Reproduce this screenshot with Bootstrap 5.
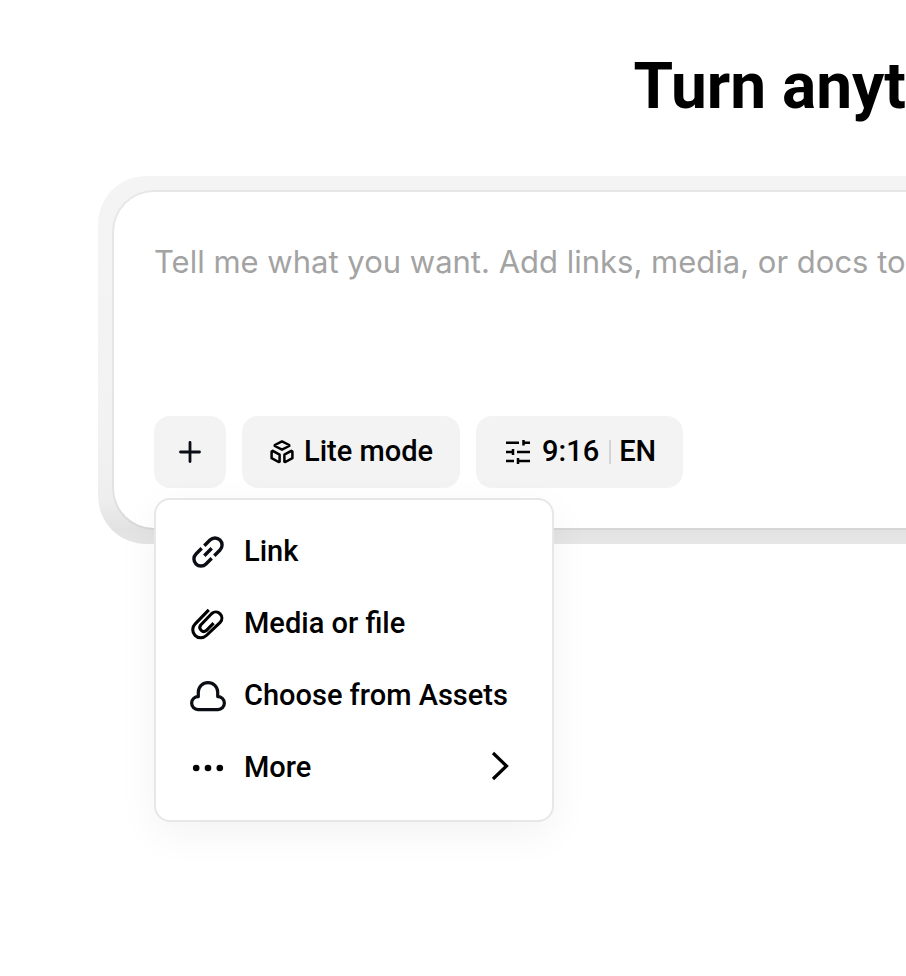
<!DOCTYPE html>
<html lang="en">
<head>
<meta charset="utf-8">
<meta name="viewport" content="width=device-width, initial-scale=1">
<title>Create</title>
<link href="https://cdn.jsdelivr.net/npm/bootstrap@5.3.0/dist/css/bootstrap.min.css" rel="stylesheet">
<style>
body{background:#fff;color:#000;font-family:Roboto,Inter,sans-serif;overflow-x:hidden}
.hero-title{font-size:64px;line-height:72px;font-weight:700;padding-top:51px;margin-bottom:53px}
.composer-frame{margin-left:98px;padding:14px 0 14px 14px;border-radius:48px 0 0 48px;background:linear-gradient(#f4f4f4 0%,#f2f2f2 70%,#eee 88%,#e2e2e2 96%,#e6e6e6 100%)}
.composer{background:#fff;background-clip:padding-box;border:2px solid rgba(0,0,0,.05);border-right:0;border-radius:42px 0 0 42px;padding:50px 0 40px 40px}
.prompt-box{display:block;height:174px;border:0;padding:0;resize:none;outline:0;background:transparent;overflow:hidden;white-space:nowrap;font:400 31px/40px Inter,sans-serif;color:#000}
.prompt-box::placeholder{color:#a3a3a3;opacity:1}
.tool-row{gap:16px}
.tool-btn{height:72px;padding:0 27px 0 26px;border:0;border-radius:16px;background:#f3f3f3;color:#000;font-size:29px;line-height:36px;font-weight:500;white-space:nowrap}
.tool-btn:hover,.tool-btn.show{background:#f3f3f3!important;color:#000!important}
.plus-btn{width:72px;padding:0}
.tool-label{padding-bottom:2px}
.ratio-divider{width:2px;height:24px;background:#d4d4d4;margin:0 8px 0 10px}
.add-menu{top:100%;left:0;width:400px;margin-top:10px;padding:16px 0;border:2px solid #e7e7e7;border-radius:16px;background:#fff;box-shadow:0 12px 40px rgba(0,0,0,.05)}
.add-menu .dropdown-item{height:72px;gap:18px;padding:0 42px 0 34px;color:#000;font-size:29px;line-height:36px;font-weight:500}
svg{flex:none;fill:none;stroke:#0b0d14;stroke-linejoin:round}
.ink{stroke:#000}
</style>
<script src="https://cdn.jsdelivr.net/npm/bootstrap@5.3.0/dist/js/bootstrap.bundle.min.js"></script>
</head>
<body>
<main class="min-vh-100 overflow-hidden">
  <h1 class="hero-title text-end text-nowrap">Turn anyt</h1>
  <section class="composer-frame">
    <form class="composer">
      <textarea class="prompt-box w-100" wrap="off" aria-label="Prompt" placeholder="Tell me what you want. Add links, media, or docs to"></textarea>
      <div class="tool-row d-flex">
        <div class="dropdown">
          <button type="button" class="btn tool-btn plus-btn show d-flex align-items-center justify-content-center" aria-label="Add" aria-expanded="true">
            <svg width="28" height="28" viewBox="0 0 28 28" stroke-width="2.8" stroke-linecap="round"><path d="M14 4.5v19M4.5 14h19"/></svg>
          </button>
          <ul class="dropdown-menu add-menu show">
            <li><a class="dropdown-item d-flex align-items-center" href="#">
              <svg width="36" height="36" viewBox="0 0 36 36" stroke-width="3.4"><path d="M14.3 11.7 20 6a7.07 7.07 0 0 1 10 10l-5.7 5.7M11.7 14.3 6 20a7.07 7.07 0 0 0 10 10l5.7-5.7M14.3 21.7l7.4-7.4"/></svg>
              <span class="tool-label">Link</span></a></li>
            <li><a class="dropdown-item d-flex align-items-center" href="#">
              <svg class="ink" width="36" height="36" viewBox="0 0 36 36" stroke-width="3.1"><path d="M18.8 3.8 5.2 17.9A8 8 0 0 0 16.4 29.5L30.4 16.1A6.1 6.1 0 0 0 21.800 7.500L10.700 19A4 4 0 0 0 16.300 24.600l7.300-7.500"/></svg>
              <span class="tool-label">Media or file</span></a></li>
            <li><a class="dropdown-item d-flex align-items-center" href="#">
              <svg width="36" height="36" viewBox="0 0 36 36" stroke-width="3.2"><path d="M8.300 18.600V14.300a9.700 9.700 0 0 1 19.400 0v4.300A6.500 6.500 0 0 1 28 31.600H8A6.500 6.500 0 0 1 8.300 18.600Z"/></svg>
              <span class="tool-label">Choose from Assets</span></a></li>
            <li><a class="dropdown-item d-flex align-items-center" href="#">
              <svg width="36" height="36" viewBox="0 0 36 36"><g fill="#000" stroke="none"><circle cx="6.200" cy="18" r="3.300"/><circle cx="18" cy="18" r="3.300"/><circle cx="29.800" cy="18" r="3.300"/></g></svg>
              <span class="tool-label">More</span>
              <svg class="ink ms-auto" width="20" height="36" viewBox="0 0 20 36" stroke-width="3.200"><path stroke-linejoin="miter" d="M3 3l13.500 13L3 29"/></svg></a></li>
          </ul>
        </div>
        <button type="button" class="btn tool-btn d-flex align-items-center gap-2">
          <svg class="ink" width="28" height="28" viewBox="0 0 28 28" stroke-width="2.500"><path d="M14 3.400 21.200 7v1l-7.200 3.600-7.200-3.600V7ZM4.800 12.800l6.800 3.900V23.800l-1 .2L3.600 20.200v-6.600ZM23.200 12.800l-6.800 3.900V23.800l1 .2L24.400 20.200v-6.600Z"/></svg>
          <span class="tool-label">Lite mode</span>
        </button>
        <button type="button" class="btn tool-btn d-flex align-items-center">
          <svg class="ink me-2" width="32" height="32" viewBox="0 0 32 32" stroke-width="2.500"><path d="M4 6.700h13M21.500 4v5.500M21.500 6.700H28M4 16h7M11 13v6M15 16h13M4 25h8M16 22v6M16 25h12"/></svg>
          <span class="tool-label">9:16</span>
          <span class="ratio-divider"></span>
          <span class="tool-label">EN</span>
        </button>
      </div>
    </form>
  </section>
</main>
</body>
</html>
